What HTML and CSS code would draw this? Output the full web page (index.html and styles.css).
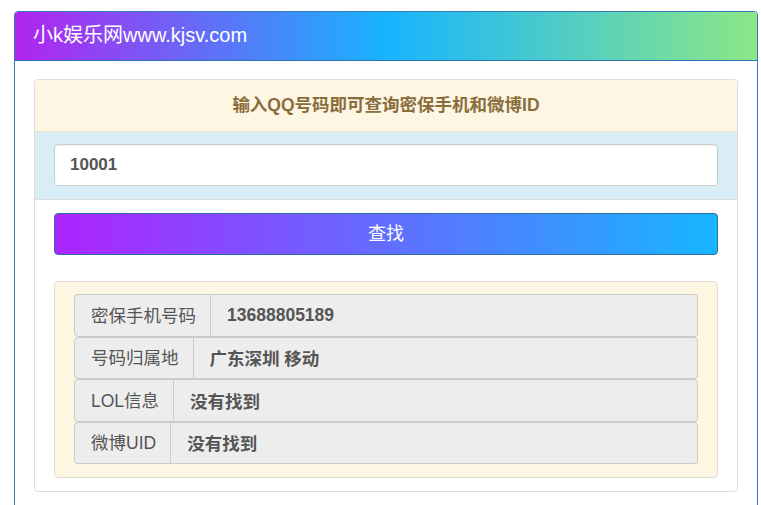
FILE: index.html
```html
<!DOCTYPE html>
<html lang="zh-CN">
<head>
<meta charset="utf-8">
<title>小k娱乐网</title>
<link rel="stylesheet" href="styles.css">
</head>
<body>
<div class="panel">
  <div class="panel-heading">小k娱乐网www.kjsv.com</div>
  <div class="panel-body">
    <div class="card">
      <div class="card-heading">输入QQ号码即可查询密保手机和微博ID</div>
      <div class="card-info">
        <input class="qq-input" type="text" value="10001">
      </div>
      <div class="card-body">
        <button class="btn-search" type="button">查找</button>
        <div class="results">
          <div class="row"><span class="label">密保手机号码</span><span class="value">13688805189</span></div>
          <div class="row"><span class="label">号码归属地</span><span class="value">广东深圳 移动</span></div>
          <div class="row"><span class="label">LOL信息</span><span class="value">没有找到</span></div>
          <div class="row"><span class="label">微博UID</span><span class="value">没有找到</span></div>
        </div>
      </div>
    </div>
  </div>
</div>
</body>
</html>
```
FILE: styles.css
```css
* { box-sizing: border-box; }
html, body { margin: 0; background: #fff; }
body {
  padding: 11px 3px 0 14px;
  font-family: "Liberation Sans", "Noto Sans CJK SC", sans-serif;
  color: #555;
}
.panel {
  border: 1px solid #337ab7;
  border-radius: 4px;
  overflow: hidden;
}
.panel-heading {
  height: 49px;
  line-height: 47px;
  padding: 0 18px;
  font-size: 20px;
  color: #fff;
  border-bottom: 1px solid #2f72b0;
  background: linear-gradient(to right, #b224ef 0%, #17b4ff 50%, #8ce786 100%);
}
.panel-body {
  padding: 18px 19px 20px;
}
.card {
  border: 1px solid #ddd;
  border-radius: 4px;
  overflow: hidden;
}
.card-heading {
  height: 52px;
  line-height: 50px;
  text-align: center;
  font-size: 17.5px;
  font-weight: bold;
  color: #8a6d3b;
  background: #fcf6e3;
  border-bottom: 1px solid #ece5cc;
}
.card-info {
  background: #d9edf7;
  padding: 12px 19px 13px;
  border-bottom: 1px solid #ddd;
}
.qq-input {
  display: block;
  width: 100%;
  height: 42px;
  padding: 0 15px;
  border: 1px solid #ccc;
  border-radius: 4px;
  box-shadow: inset 0 1px 1px rgba(0,0,0,.075);
  font-family: inherit;
  font-size: 17px;
  font-weight: bold;
  color: #555;
  background: #fff;
  outline: none;
}
.card-body {
  padding: 13px 19px 13px;
}
.btn-search {
  display: block;
  width: 100%;
  height: 42px;
  padding: 0 0 4px;
  border: 1px solid #2e6da4;
  border-radius: 4px;
  background: linear-gradient(to right, #ad24ff 0%, #17b6ff 100%);
  color: #fff;
  font-family: inherit;
  font-size: 18px;
  cursor: pointer;
}
.results {
  margin-top: 26px;
  background: #fcf6e3;
  border: 1px solid #e2ddd0;
  border-radius: 4px;
  padding: 12px 19px 13px;
  display: flex;
  flex-direction: column;
}
.row {
  display: flex;
  height: 42.5px;
}
.label, .value {
  display: flex;
  align-items: center;
  background: #ededed;
  border: 1px solid #cbcbcb;
  font-size: 17.5px;
  color: #555;
}
.label {
  padding: 0 14px 2px 16px;
  border-radius: 4px 0 0 4px;
  white-space: nowrap;
}
.value {
  flex: 1;
  border-left: 0;
  border-radius: 0 4px 4px 0;
  padding-left: 16px;
  font-weight: bold;
}
```
